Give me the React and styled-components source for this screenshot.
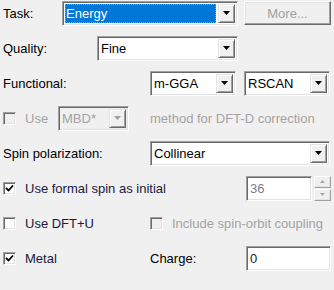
import styled, { createGlobalStyle } from "styled-components";

const Global = createGlobalStyle`
  html, body {
    margin: 0;
    padding: 0;
    background: #f0f0f0;
  }
  body {
    font-family: "Liberation Sans", Arial, sans-serif;
    font-size: 13px;
    color: #000;
  }
`;

const Page = styled.div`
  width: 334px;
  height: 290px;
  box-sizing: border-box;
  padding: 0 4px 0 3px;
  display: grid;
  grid-template-rows: repeat(8, 26px);
  row-gap: 9px;
  background: #f0f0f0;
`;

const Row = styled.div`
  display: flex;
  align-items: center;
  height: 26px;
`;

const Label = styled.span`
  flex: none;
  width: ${(p) => p.$w || "auto"};
  color: ${(p) => (p.$disabled ? "#a3a3a3" : p.$tint ? "#1b1840" : "#000")};
  white-space: nowrap;
`;

const Sunken = styled.div`
  flex: none;
  box-sizing: border-box;
  width: ${(p) => p.$w}px;
  height: ${(p) => p.$h || 25}px;
  margin-left: ${(p) => p.$ml || 0}px;
  display: flex;
  align-items: stretch;
  border: 1px solid;
  border-color: #a0a0a0 #ffffff #ffffff #a0a0a0;
  background: ${(p) => (p.$disabled ? "#f0f0f0" : "#fff")};
  box-shadow: inset 1px 1px 0 #696969, inset -1px -1px 0 #e3e3e3;
  padding: 2px 2px 2px 2px;
`;

const Field = styled.div`
  flex: 1;
  display: flex;
  align-items: center;
  padding-left: ${(p) => (p.$sel ? 0 : 1)}px;
  color: ${(p) => p.$color || "#000"};
  white-space: nowrap;
  overflow: hidden;
`;

const Selected = styled.div`
  flex: 1;
  margin-right: 2px;
  display: flex;
  align-items: center;
  padding-left: 1px;
  background: #0078d7;
  color: #fff;
  outline: 1px dotted #e08a2a;
  outline-offset: -1px;
`;

const ArrowBtn = styled.div`
  flex: none;
  width: 17px;
  display: flex;
  align-items: center;
  justify-content: center;
  box-sizing: border-box;
  background: #f0f0f0;
  border: 1px solid;
  border-color: #e3e3e3 #696969 #696969 #e3e3e3;
  box-shadow: inset 1px 1px 0 #fff, inset -1px -1px 0 #a0a0a0;
`;

const Tri = ({ color = "#000", up = false, size = 7 }) => (
  <svg width={size} height={Math.ceil(size / 2)} viewBox={`0 0 ${size} ${Math.ceil(size / 2)}`}>
    <polygon
      points={
        up
          ? `0,${Math.ceil(size / 2)} ${size},${Math.ceil(size / 2)} ${size / 2},0`
          : `0,0 ${size},0 ${size / 2},${Math.ceil(size / 2)}`
      }
      fill={color}
    />
  </svg>
);

const Combo = ({ w, ml, value, selected, disabled, color }) => (
  <Sunken $w={w} $ml={ml} $disabled={disabled}>
    {selected ? (
      <Selected>{value}</Selected>
    ) : (
      <Field $color={disabled ? "#a3a3a3" : color}>{value}</Field>
    )}
    <ArrowBtn>
      <Tri color={disabled ? "#a0a0a0" : "#000"} />
    </ArrowBtn>
  </Sunken>
);

const Button = styled.div`
  flex: none;
  box-sizing: border-box;
  width: ${(p) => p.$w}px;
  height: 24px;
  margin-left: ${(p) => p.$ml || 0}px;
  display: flex;
  align-items: center;
  justify-content: center;
  color: #a0a0a0;
  background: #f0f0f0;
  border: 1px solid;
  border-color: #fff #696969 #696969 #fff;
  box-shadow: inset -1px -1px 0 #a0a0a0, inset 1px 1px 0 #e3e3e3;
`;

const Box = styled.span`
  flex: none;
  box-sizing: border-box;
  width: 13px;
  height: 13px;
  margin-right: ${(p) => p.$mr || 9}px;
  display: inline-flex;
  align-items: center;
  justify-content: center;
  background: ${(p) => (p.$disabled ? "#f0f0f0" : "#fff")};
  border: 1px solid;
  border-color: #a0a0a0 #fff #fff #a0a0a0;
  box-shadow: inset 1px 1px 0 #696969, inset -1px -1px 0 #e3e3e3;
`;

const Check = ({ checked, disabled }) => (
  <Box $disabled={disabled}>
    {checked && (
      <svg width="9" height="9" viewBox="0 0 9 9">
        <polyline points="1,4 3.5,6.5 8,1.5" fill="none" stroke="#000" strokeWidth="1.8" />
      </svg>
    )}
  </Box>
);

const SpinGroup = styled.div`
  flex: none;
  display: flex;
  flex-direction: column;
  gap: 1px;
  margin-left: 2px;
`;

const SpinBtn = styled.div`
  box-sizing: border-box;
  width: 17px;
  height: 12px;
  display: flex;
  align-items: center;
  justify-content: center;
  background: #f0f0f0;
  border: 1px solid;
  border-color: #fff #a0a0a0 #a0a0a0 #fff;
  box-shadow: inset -1px -1px 0 #e3e3e3;
`;

const Spacer = styled.span`
  flex: none;
  width: ${(p) => p.$w}px;
`;

export default function App() {
  return (
    <>
      <Global />
      <Page>
        <Row>
          <Label $w="59px">Task:</Label>
          <Combo w={176} value="Energy" selected />
          <Button $w={87} $ml={6}>More...</Button>
        </Row>
        <Row>
          <Label $w="94px">Quality:</Label>
          <Combo w={141} value="Fine" />
        </Row>
        <Row>
          <Label $w="147px">Functional:</Label>
          <Combo w={86} value="m-GGA" />
          <Combo w={86} ml={8} value="RSCAN" />
        </Row>
        <Row>
          <Check disabled />
          <Label $disabled $w="33px">Use</Label>
          <Combo w={71} value="MBD*" disabled />
          <Spacer $w={21} />
          <Label $disabled>method for DFT-D correction</Label>
        </Row>
        <Row>
          <Label $w="147px">Spin polarization:</Label>
          <Combo w={180} value="Collinear" />
        </Row>
        <Row>
          <Check checked />
          <Label $tint $w="221px">Use formal spin as initial</Label>
          <Sunken $w={66}>
            <Field $color="#7a7a8e">36</Field>
          </Sunken>
          <SpinGroup>
            <SpinBtn>
              <Tri up size={5} color="#a8a8a8" />
            </SpinBtn>
            <SpinBtn>
              <Tri size={5} color="#a8a8a8" />
            </SpinBtn>
          </SpinGroup>
        </Row>
        <Row>
          <Check />
          <Label $tint $w="125px">Use DFT+U</Label>
          <Check disabled />
          <Label $disabled>Include spin-orbit coupling</Label>
        </Row>
        <Row>
          <Check checked />
          <Label $tint $w="125px">Metal</Label>
          <Label $w="96px">Charge:</Label>
          <Sunken $w={85}>
            <Field $color="#1a1a1a">0</Field>
          </Sunken>
        </Row>
      </Page>
    </>
  );
}
